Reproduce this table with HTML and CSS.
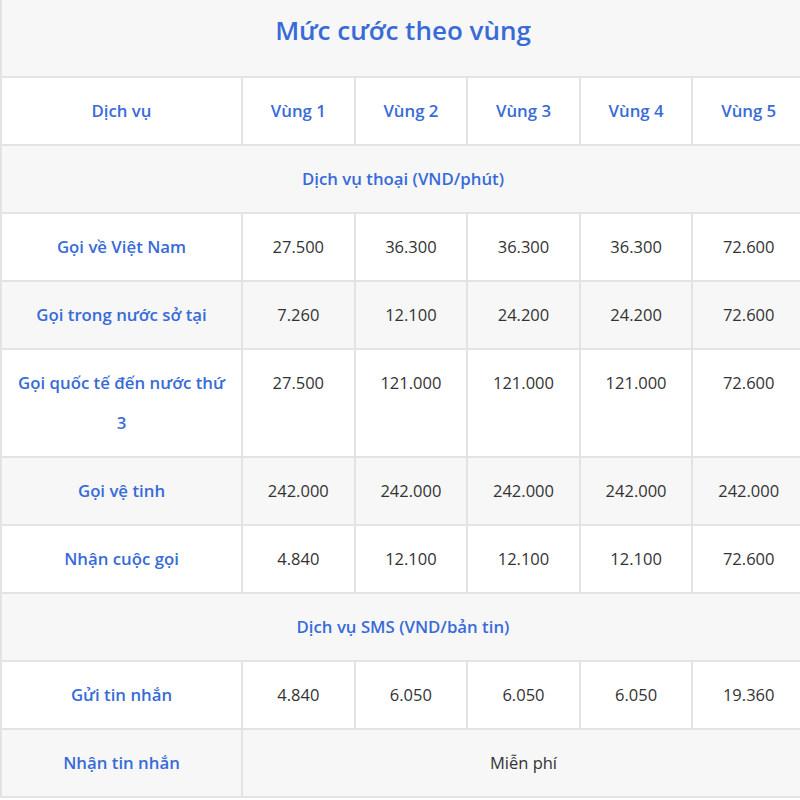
FILE: index.html
```html
<!DOCTYPE html>
<html lang="vi">
<head>
<meta charset="utf-8">
<title>Mức cước theo vùng</title>
<link rel="stylesheet" href="styles.css">
</head>
<body>
<div class="wrap">
<table class="rates">
  <colgroup>
    <col class="c-svc">
    <col><col><col><col><col>
  </colgroup>
  <tbody>
    <tr class="title-row"><th colspan="6" class="title">Mức cước theo vùng</th></tr>
    <tr>
      <th>Dịch vụ</th><th>Vùng 1</th><th>Vùng 2</th><th>Vùng 3</th><th>Vùng 4</th><th>Vùng 5</th>
    </tr>
    <tr><th colspan="6" class="section">Dịch vụ thoại (VND/phút)</th></tr>
    <tr><th>Gọi về Việt Nam</th><td>27.500</td><td>36.300</td><td>36.300</td><td>36.300</td><td>72.600</td></tr>
    <tr><th>Gọi trong nước sở tại</th><td>7.260</td><td>12.100</td><td>24.200</td><td>24.200</td><td>72.600</td></tr>
    <tr><th>Gọi quốc tế đến nước thứ 3</th><td class="top">27.500</td><td class="top">121.000</td><td class="top">121.000</td><td class="top">121.000</td><td class="top">72.600</td></tr>
    <tr><th>Gọi vệ tinh</th><td>242.000</td><td>242.000</td><td>242.000</td><td>242.000</td><td>242.000</td></tr>
    <tr><th>Nhận cuộc gọi</th><td>4.840</td><td>12.100</td><td>12.100</td><td>12.100</td><td>72.600</td></tr>
    <tr><th colspan="6" class="section">Dịch vụ SMS (VND/bản tin)</th></tr>
    <tr><th>Gửi tin nhắn</th><td>4.840</td><td>6.050</td><td>6.050</td><td>6.050</td><td>19.360</td></tr>
    <tr><th>Nhận tin nhắn</th><td colspan="5">Miễn phí</td></tr>
  </tbody>
</table>
</div>
</body>
</html>
```

FILE: styles.css
```css
html, body {
  margin: 0;
  padding: 0;
  background: #ffffff;
}

.wrap {
  width: 800px;
  height: 800px;
  overflow: hidden;
}

.rates {
  width: 806px;
  table-layout: fixed;
  border-collapse: collapse;
  font-family: "Open Sans", "Noto Sans", sans-serif;
  font-size: 16.5px;
  color: #333333;
}

.c-svc {
  width: 241px;
}

.rates th,
.rates td {
  border: 2px solid #e3e3e3;
  padding: 13px 12px;
  line-height: 40px;
  text-align: center;
  vertical-align: middle;
}

.rates th {
  color: #386bd8;
  font-weight: 600;
  font-size: 16.8px;
}

.rates td {
  font-weight: 400;
}

.rates td.top {
  vertical-align: top;
}

.rates tr:nth-child(odd) {
  background: #f7f7f7;
}

.rates tr:nth-child(even) {
  background: #ffffff;
}

.rates th.title {
  font-size: 26px;
  font-weight: 600;
  line-height: 46px;
  padding: 7px 8px 23px;
  border-top: 0;
}
```
